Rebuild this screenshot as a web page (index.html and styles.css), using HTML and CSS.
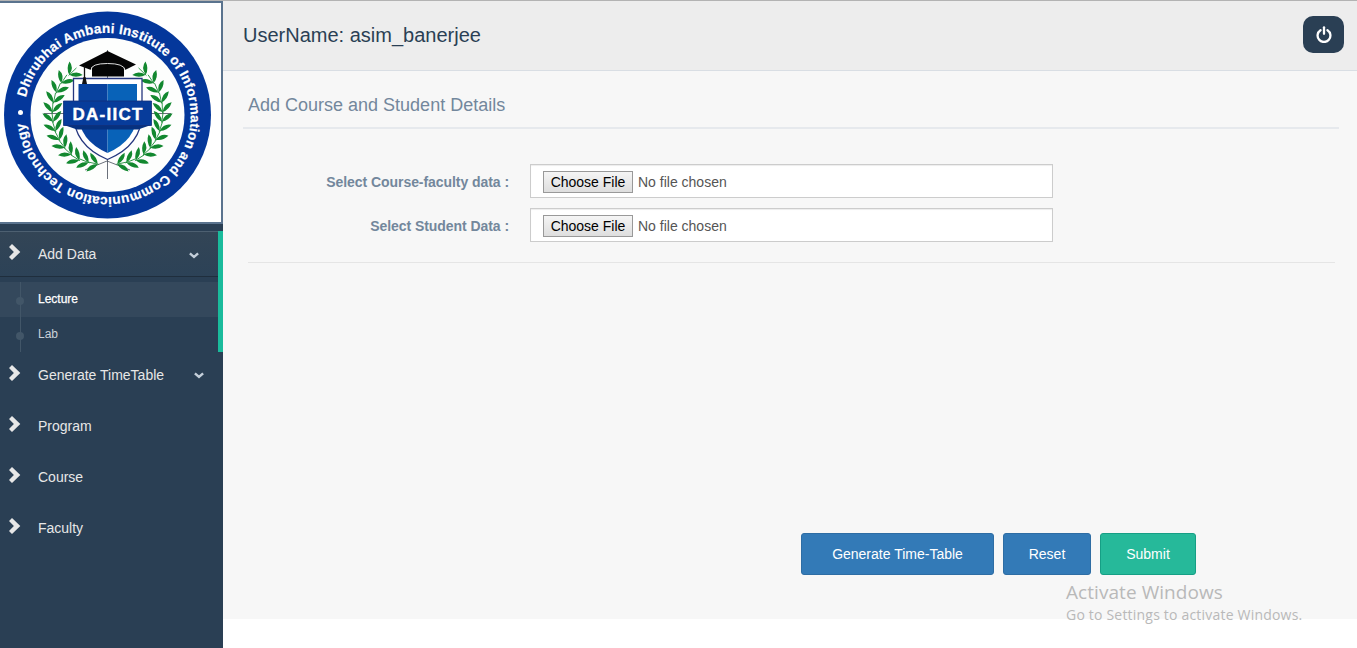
FILE: index.html
```html
<!DOCTYPE html>
<html lang="en">
<head>
<meta charset="utf-8">
<title>Add Course and Student Details</title>
<link rel="stylesheet" href="styles.css">
</head>
<body>
<svg class="defs" width="0" height="0" aria-hidden="true">
  <defs>
    <symbol id="chev-right" viewBox="0 0 12 16"><path d="M0 3 3 0 11.300 8 3 16 0 13 4.900 8z" fill="#e7e7e7"/></symbol>
    <symbol id="chev-down" viewBox="0 0 10 7"><path d="M.900 1.300 5 5 9.100 1.300" fill="none" stroke="#c4cfda" stroke-width="2.400"/></symbol>
    <g id="sprig">
      <path d="M1 0Q-1-7-8.500-9.500Q-8-2 1 0zM1 0Q-1 7-8.500 9.500Q-8 2 1 0z"/>
      <path d="M2 0H-9" stroke="#12882f" stroke-width=".8"/>
    </g>
    <g id="branch" fill="#12882f">
      <use href="#sprig" transform="rotate(12 107.500 113) translate(107.500 165)"/>
      <use href="#sprig" transform="rotate(22 107.500 113) translate(107.500 166)"/>
      <use href="#sprig" transform="rotate(32 107.500 113) translate(107.500 168)"/>
      <use href="#sprig" transform="rotate(42 107.500 113) translate(107.500 168)"/>
      <use href="#sprig" transform="rotate(52 107.500 113) translate(107.500 168)"/>
      <use href="#sprig" transform="rotate(62 107.500 113) translate(107.500 168)"/>
      <use href="#sprig" transform="rotate(72 107.500 113) translate(107.500 168)"/>
      <use href="#sprig" transform="rotate(82 107.500 113) translate(107.500 168)"/>
      <use href="#sprig" transform="rotate(92 107.500 113) translate(107.500 168)"/>
      <use href="#sprig" transform="rotate(102 107.500 113) translate(107.500 168)"/>
      <use href="#sprig" transform="rotate(113 107.500 113) translate(107.500 168)"/>
      <use href="#sprig" transform="rotate(124 107.500 113) translate(107.500 168)"/>
      <use href="#sprig" transform="rotate(136 107.500 113) translate(107.500 167)"/>
    </g>
  </defs>
</svg>
<div class="page">
  <aside class="sidebar">
    <div class="logo">
      <svg width="221" height="219" viewBox="0 3 221 219" role="img" aria-label="DA-IICT">
        <defs><path id="ring" d="M25.900 97.350A83.500 83.500 0 0 1 189.100 132.650A83.500 83.500 0 0 1 25.900 97.350"/></defs>
        <circle cx="107.500" cy="115" r="103.500" fill="#04379b"/>
        <circle cx="107.500" cy="115" r="77" fill="#fdfefd"/>
        <circle cx="20.500" cy="112.500" r="2.500" fill="#fff"/>
        <text class="ring-text"><textPath href="#ring" textLength="492" lengthAdjust="spacing">Dhirubhai Ambani Institute of Information and Communication Technology</textPath></text>
        <path d="M107.500 50V179M44 113.500H171M85 170 107 161 130 170" fill="none" stroke="#444b58" stroke-width=".8"/>
        <use href="#branch"/>
        <use href="#branch" transform="translate(215 0) scale(-1 1)"/>
        <path d="M73.500 78.500H142V113Q142 145 107.500 159.500Q73.500 145 73.500 113z" fill="#fff" stroke="#25377f" stroke-width="1.300"/>
        <path d="M78.500 84H107.500V153Q78.500 140 78.500 113z" fill="#08429f"/>
        <path d="M107.500 84H137V113Q137 140 107.500 153z" fill="#0862b8"/>
        <path d="M64 125H151L138 129.500H77z" fill="#06317f"/>
        <path d="M63.500 101H151.500V125.500H63.500z" fill="#073c9b" stroke="#122f78" stroke-width=".8"/>
        <path d="M92 65Q108 59 124 65V76.500H92z" fill="#050505"/>
        <path d="M79 65.500 107.500 51 136 64.500 125 70Q125 63.500 107.500 63.500T91 70z" fill="#050505"/>
        <path d="M91 70Q91 63.500 107.500 63.500T125 70" fill="none" stroke="#ddd" stroke-width="1"/>
        <path d="M84.500 66V81" stroke="#111" stroke-width="1.300"/>
        <path d="M83.500 77H85.500L87 84H82z" fill="#111"/>
        <text class="shield-text" x="72.500" y="119.500" textLength="70" lengthAdjust="spacing">DA-IICT</text>
      </svg>
    </div>
    <ul class="menu">
      <li class="active">
        <a class="item"><svg class="lead"><use href="#chev-right"/></svg><span>Add Data</span><svg class="caret"><use href="#chev-down"/></svg></a>
        <ul class="submenu">
          <li class="current">Lecture</li>
          <li>Lab</li>
        </ul>
      </li>
      <li><a class="item"><svg class="lead"><use href="#chev-right"/></svg><span>Generate TimeTable</span><svg class="caret"><use href="#chev-down"/></svg></a></li>
      <li><a class="item"><svg class="lead"><use href="#chev-right"/></svg><span>Program</span></a></li>
      <li><a class="item"><svg class="lead"><use href="#chev-right"/></svg><span>Course</span></a></li>
      <li><a class="item"><svg class="lead"><use href="#chev-right"/></svg><span>Faculty</span></a></li>
    </ul>
  </aside>
  <main class="main">
    <header class="topbar">
      <span class="user">UserName: asim_banerjee</span>
      <button class="power" aria-label="Log out">
        <svg width="16" height="17" viewBox="0 0 16 17"><path d="M4.500 4.200A6.400 6.400 0 1 0 11.500 4.200" fill="none" stroke="#fff" stroke-width="2.300" stroke-linecap="round"/><path d="M8 1.300V7.800" stroke="#fff" stroke-width="2.300" stroke-linecap="round"/></svg>
      </button>
    </header>
    <section class="panel">
      <h2 class="title">Add Course and Student Details</h2>
      <form class="form">
        <div class="row"><label>Select Course-faculty data :</label><div class="file"><button type="button">Choose File</button><span>No file chosen</span></div></div>
        <div class="row"><label>Select Student Data :</label><div class="file"><button type="button">Choose File</button><span>No file chosen</span></div></div>
        <hr>
        <div class="actions">
          <button type="button" class="btn generate">Generate Time-Table</button>
          <button type="button" class="btn reset">Reset</button>
          <button type="button" class="btn submit">Submit</button>
        </div>
      </form>
    </section>
  </main>
</div>
<div class="watermark"><div class="wm-title">Activate Windows</div><div class="wm-text">Go to Settings to activate Windows.</div></div>
</body>
</html>
```
FILE: styles.css
```css
* { box-sizing: border-box; }
body { margin: 0; background: #fff; font-family: "Liberation Sans", Arial, sans-serif; font-size: 14px; color: #73879c; overflow: hidden; }
button { font-family: inherit; font-size: 14px; margin: 0; }
ul { list-style: none; margin: 0; padding: 0; }
.defs { display: block; }
.page { display: flex; height: 648px; border-top: 1px solid #b3b3b3; }

.sidebar { width: 223px; background: #2a3f54; flex: none; }
.logo { height: 223px; background: #fff; border: 2px solid #5a738e; border-left: 0; overflow: hidden; }
.logo svg { display: block; }
.ring-text { font-size: 13.500px; font-weight: bold; fill: #fff; stroke: #fff; stroke-width: .2px; }
.shield-text { font-size: 17px; font-weight: bold; fill: #fff; stroke: #fff; stroke-width: .4px; }

.menu { padding-top: 7px; }
.menu > li { margin-bottom: 6px; }
.menu > li.active { margin-bottom: 0; border-right: 5px solid #1abb9c; }
.item { display: flex; align-items: center; height: 45px; padding: 0 19px 0 8.500px; color: #e7e7e7; line-height: 20px; }
.active .item { height: 46px; border-top: 1px solid #4d6071; border-bottom: 1px solid #1f2e3d; background: linear-gradient(#334556, #2c4257); }
.lead { width: 12px; height: 16px; margin: 0 17.500px 4px 0; }
.caret { width: 10px; height: 7px; margin: 2px 0 0 auto; }
.submenu { padding-top: 5px; font-size: 12px; color: #c9d1d8; }
.submenu li { position: relative; height: 35px; padding-left: 38px; line-height: 34px; }
.submenu li.current { background: rgba(255,255,255,.05); color: #fff; -webkit-text-stroke: .25px #fff; }
.submenu li::before { content: ""; position: absolute; left: 16px; top: 15px; width: 8px; height: 8px; border-radius: 50%; background: #425668; }
.submenu li::after { content: ""; position: absolute; left: 20px; top: 0; bottom: 0; width: 1px; background: #425668; }

.main { flex: 1; height: 618px; background: #f7f7f7; }
.topbar { display: flex; justify-content: space-between; align-items: center; height: 70px; padding: 0 13px 2px 20px; background: #ededed; border-bottom: 1px solid #d9dee4; }
.user { padding-top: 2px; font-size: 20px; color: #2a3f54; }
.power { display: flex; align-items: center; justify-content: center; width: 41px; height: 37px; padding: 0; border: 0; border-radius: 10px; background: #2a3f54; }
.panel { padding: 0 18px 0 20px; }
.title { margin: 0; height: 58px; padding: 22px 5px 0; border-bottom: 2px solid #e6e9ed; font-size: 18px; line-height: 24px; font-weight: normal; }
.form { padding: 35px 4px 0 5px; }
.row { display: flex; align-items: center; height: 34px; margin-bottom: 10px; }
.row label { width: 261px; margin-right: 21px; padding-top: 2px; text-align: right; font-weight: bold; letter-spacing: -.06px; }
.file { display: flex; align-items: center; width: 523px; height: 34px; padding: 1px 12px 0; background: #fff; border: 1px solid #ccc; box-shadow: inset 0 1px 1px rgba(0,0,0,.075); color: #555; }
.file button { width: 90px; height: 22px; margin-right: 5px; padding: 0; border: 1px solid #999; background: linear-gradient(#f5f5f5, #dedede); color: #000; }
hr { margin: 20px 0 0; border: 0; border-top: 1px solid #e5e5e5; }
.actions { display: flex; gap: 9px; margin: 270px 0 0 553px; }
.btn { height: 42px; padding: 0; border: 1px solid #2e6da4; border-radius: 3px; background: #337ab7; color: #fff; }
.generate { width: 193px; }
.reset { width: 88px; }
.submit { width: 96px; background: #26b99a; border-color: #169f85; }

.watermark { position: absolute; left: 1066px; top: 580px; color: #b9b9b9; font-family: "Open Sans", sans-serif; white-space: nowrap; }
.wm-title { font-size: 19px; line-height: 24px; letter-spacing: .06px; }
.wm-text { font-size: 14px; line-height: 22px; letter-spacing: .2px; }
```
